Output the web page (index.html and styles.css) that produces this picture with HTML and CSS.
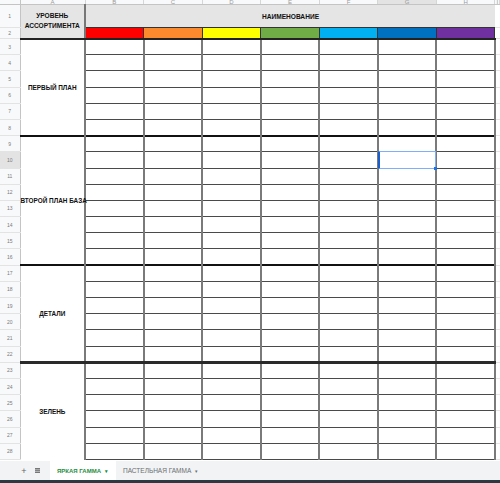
FILE: index.html
```html
<!DOCTYPE html>
<html lang="ru">
<head>
<meta charset="utf-8">
<title>Sheet</title>
<link rel="stylesheet" href="styles.css">
</head>
<body>
<div class="sheet-wrap">
<table class="sheet">
<colgroup><col class="c-rh"><col class="c-a"><col class="c-d" span="7"><col class="c-i"></colgroup>
<tr class="r-colhdr"><th class="corner"></th><th class="ch">A</th><th class="ch">B</th><th class="ch">C</th><th class="ch">D</th><th class="ch">E</th><th class="ch">F</th><th class="ch hl">G</th><th class="ch">H</th><th class="ch">I</th></tr>
<tr class="r1"><th class="rh">1</th><td class="hdr lbl-h" rowspan="2">УРОВЕНЬ<br>АССОРТИМЕНТА</td><td class="hdr title" colspan="7">НАИМЕНОВАНИЕ</td><td class="ext"></td></tr>
<tr class="r2"><th class="rh">2</th><td class="sw red"></td><td class="sw orange"></td><td class="sw yellow"></td><td class="sw green"></td><td class="sw cyan"></td><td class="sw blue"></td><td class="sw purple"></td><td class="ext"></td></tr>

<tr class="rd gtop"><th class="rh">3</th><td class="lbl" rowspan="6">ПЕРВЫЙ ПЛАН</td><td class="d"></td><td class="d"></td><td class="d"></td><td class="d"></td><td class="d"></td><td class="d"></td><td class="d"></td><td class="ext"></td></tr>
<tr class="rd"><th class="rh">4</th><td class="d"></td><td class="d"></td><td class="d"></td><td class="d"></td><td class="d"></td><td class="d"></td><td class="d"></td><td class="ext"></td></tr>
<tr class="rd"><th class="rh">5</th><td class="d"></td><td class="d"></td><td class="d"></td><td class="d"></td><td class="d"></td><td class="d"></td><td class="d"></td><td class="ext"></td></tr>
<tr class="rd"><th class="rh">6</th><td class="d"></td><td class="d"></td><td class="d"></td><td class="d"></td><td class="d"></td><td class="d"></td><td class="d"></td><td class="ext"></td></tr>
<tr class="rd"><th class="rh">7</th><td class="d"></td><td class="d"></td><td class="d"></td><td class="d"></td><td class="d"></td><td class="d"></td><td class="d"></td><td class="ext"></td></tr>
<tr class="rd"><th class="rh">8</th><td class="d"></td><td class="d"></td><td class="d"></td><td class="d"></td><td class="d"></td><td class="d"></td><td class="d"></td><td class="ext"></td></tr>

<tr class="rd gtop"><th class="rh">9</th><td class="lbl" rowspan="8">ВТОРОЙ ПЛАН БАЗА</td><td class="d"></td><td class="d"></td><td class="d"></td><td class="d"></td><td class="d"></td><td class="d"></td><td class="d"></td><td class="ext"></td></tr>
<tr class="rd"><th class="rh hl">10</th><td class="d"></td><td class="d"></td><td class="d"></td><td class="d"></td><td class="d"></td><td class="d sel"></td><td class="d"></td><td class="ext"></td></tr>
<tr class="rd"><th class="rh">11</th><td class="d"></td><td class="d"></td><td class="d"></td><td class="d"></td><td class="d"></td><td class="d"></td><td class="d"></td><td class="ext"></td></tr>
<tr class="rd"><th class="rh">12</th><td class="d"></td><td class="d"></td><td class="d"></td><td class="d"></td><td class="d"></td><td class="d"></td><td class="d"></td><td class="ext"></td></tr>
<tr class="rd"><th class="rh">13</th><td class="d"></td><td class="d"></td><td class="d"></td><td class="d"></td><td class="d"></td><td class="d"></td><td class="d"></td><td class="ext"></td></tr>
<tr class="rd"><th class="rh">14</th><td class="d"></td><td class="d"></td><td class="d"></td><td class="d"></td><td class="d"></td><td class="d"></td><td class="d"></td><td class="ext"></td></tr>
<tr class="rd"><th class="rh">15</th><td class="d"></td><td class="d"></td><td class="d"></td><td class="d"></td><td class="d"></td><td class="d"></td><td class="d"></td><td class="ext"></td></tr>
<tr class="rd"><th class="rh">16</th><td class="d"></td><td class="d"></td><td class="d"></td><td class="d"></td><td class="d"></td><td class="d"></td><td class="d"></td><td class="ext"></td></tr>

<tr class="rd gtop"><th class="rh">17</th><td class="lbl" rowspan="6">ДЕТАЛИ</td><td class="d"></td><td class="d"></td><td class="d"></td><td class="d"></td><td class="d"></td><td class="d"></td><td class="d"></td><td class="ext"></td></tr>
<tr class="rd"><th class="rh">18</th><td class="d"></td><td class="d"></td><td class="d"></td><td class="d"></td><td class="d"></td><td class="d"></td><td class="d"></td><td class="ext"></td></tr>
<tr class="rd"><th class="rh">19</th><td class="d"></td><td class="d"></td><td class="d"></td><td class="d"></td><td class="d"></td><td class="d"></td><td class="d"></td><td class="ext"></td></tr>
<tr class="rd"><th class="rh">20</th><td class="d"></td><td class="d"></td><td class="d"></td><td class="d"></td><td class="d"></td><td class="d"></td><td class="d"></td><td class="ext"></td></tr>
<tr class="rd"><th class="rh">21</th><td class="d"></td><td class="d"></td><td class="d"></td><td class="d"></td><td class="d"></td><td class="d"></td><td class="d"></td><td class="ext"></td></tr>
<tr class="rd"><th class="rh">22</th><td class="d"></td><td class="d"></td><td class="d"></td><td class="d"></td><td class="d"></td><td class="d"></td><td class="d"></td><td class="ext"></td></tr>

<tr class="rd gtop thick"><th class="rh">23</th><td class="lbl" rowspan="6">ЗЕЛЕНЬ</td><td class="d"></td><td class="d"></td><td class="d"></td><td class="d"></td><td class="d"></td><td class="d"></td><td class="d"></td><td class="ext"></td></tr>
<tr class="rd"><th class="rh">24</th><td class="d"></td><td class="d"></td><td class="d"></td><td class="d"></td><td class="d"></td><td class="d"></td><td class="d"></td><td class="ext"></td></tr>
<tr class="rd"><th class="rh">25</th><td class="d"></td><td class="d"></td><td class="d"></td><td class="d"></td><td class="d"></td><td class="d"></td><td class="d"></td><td class="ext"></td></tr>
<tr class="rd"><th class="rh">26</th><td class="d"></td><td class="d"></td><td class="d"></td><td class="d"></td><td class="d"></td><td class="d"></td><td class="d"></td><td class="ext"></td></tr>
<tr class="rd"><th class="rh">27</th><td class="d"></td><td class="d"></td><td class="d"></td><td class="d"></td><td class="d"></td><td class="d"></td><td class="d"></td><td class="ext"></td></tr>
<tr class="rd"><th class="rh">28</th><td class="d"></td><td class="d"></td><td class="d"></td><td class="d"></td><td class="d"></td><td class="d"></td><td class="d"></td><td class="ext"></td></tr>
</table>
</div>
<div class="tabs">
  <span class="tab-add">+</span>
  <span class="tab-list"><svg width="5" height="5" viewBox="0 0 5 5"><rect x="0" y="0" width="5" height="5" fill="#777"/><rect x="0" y="1.6" width="5" height="0.5" fill="#f1f3f4"/><rect x="0" y="3" width="5" height="0.5" fill="#f1f3f4"/></svg></span>
  <span class="tab active">ЯРКАЯ ГАММА <span class="caret">▾</span></span>
  <span class="tab">ПАСТЕЛЬНАЯ ГАММА <span class="caret">▾</span></span>
</div>
<div class="taskline"></div>
</body>
</html>
```
FILE: styles.css
```css
html, body {
  margin: 0;
  padding: 0;
}
body {
  width: 500px;
  height: 483px;
  overflow: hidden;
  background: #fff;
  font-family: "Liberation Sans", Arial, sans-serif;
}
.sheet-wrap {
  height: 461px;
  overflow: hidden;
}
.sheet {
  border-collapse: collapse;
  table-layout: fixed;
  width: 500px;
}
.c-rh { width: 20px; }
.c-a { width: 65px; }
.c-d { width: 58.57px; }
.c-i { width: 5px; }
.sheet th, .sheet td {
  padding: 0;
  overflow: visible;
}
.r-colhdr { height: 4px; }
.corner {
  background: #f8f9fa;
  border-right: 1px solid #c4c4c4;
  border-bottom: 1px solid #c4c4c4;
}
.ch {
  background: #f8f9fa;
  border-right: 1px solid #d6d6d6;
  border-bottom: 1px solid #c4c4c4;
  font-size: 6px;
  line-height: 4px;
  height: 4px;
  color: #9a9a9a;
  font-weight: normal;
  overflow: hidden;
  vertical-align: top;
}
.ch.hl { background: #e3e3e3; }
.r1 { height: 23px; }
.r2 { height: 11px; }
.rd { height: 16.2px; }
.rh {
  background: #f8f9fa;
  border-right: 1px solid #c4c4c4;
  border-bottom: 1px solid #e3e3e3;
  font-size: 5px;
  font-weight: normal;
  color: #7a7a7a;
  text-align: center;
  vertical-align: middle;
}
.rh.hl { background: #e3e3e3; }
.hdr {
  background: #e5e5e5;
  font-weight: bold;
  font-size: 6.6px;
  color: #111;
  text-align: center;
  vertical-align: middle;
}
.lbl-h {
  line-height: 10px;
  border-bottom: 2px solid #222;
  border-right: 2px solid #777;
  padding-top: 1px;
}
.title {
  border-bottom: 1px solid #333;
}
.sw {
  border: 1px solid #333;
  border-bottom: 2px solid #222;
}
.red { background: #ff0000; }
.orange { background: #fb8a2e; }
.yellow { background: #ffff00; }
.green { background: #70ad47; }
.cyan { background: #00b0f0; }
.blue { background: #0070c0; }
.purple { background: #7030a0; }
.ext {
  border-bottom: 1px solid #e3e3e3;
}
.lbl {
  background: #fff;
  font-weight: bold;
  font-size: 6.4px;
  color: #111;
  text-align: center;
  vertical-align: middle;
  white-space: nowrap;
}
.d {
  border-top: 1px solid #4a4a4a;
  border-bottom: 1px solid #4a4a4a;
  border-left: 2px solid #7a7a7a;
  border-right: 2px solid #7a7a7a;
}
.gtop td {
  border-top: 2px solid #111;
}
.thick td {
  border-top: 3px solid #2a2a2a;
}
.gtop td.ext {
  border-top: 1px solid #e3e3e3;
}
.sel {
  position: relative;
}
.sel::after {
  content: "";
  position: absolute;
  left: -1px;
  top: -1px;
  right: -1px;
  bottom: -1px;
  border: 1px solid #7fb0f7;
  border-left: 2px solid #1a5fd0;
  z-index: 1;
}
.sel::before {
  content: "";
  position: absolute;
  right: -2px;
  bottom: -2px;
  width: 3px;
  height: 3px;
  background: #1a73e8;
  z-index: 2;
}
.tabs {
  height: 19px;
  background: #f1f3f4;
  display: flex;
  align-items: stretch;
  font-size: 6.5px;
}
.tab-add {
  width: 8px;
  margin-left: 20px;
  color: #666;
  font-size: 9px;
  display: flex;
  align-items: center;
  justify-content: center;
}
.tab-list {
  width: 8px;
  margin-left: 5px;
  display: flex;
  align-items: center;
  justify-content: center;
}
.tab {
  display: flex;
  align-items: center;
  color: #6b6e72;
  padding: 0 7px 0 7px;
  white-space: nowrap;
}
.tab.active {
  margin-left: 9px;
  background: #fff;
  color: #1e8e3e;
  font-weight: bold;
  padding: 0 8px 0 7px;
  font-size: 6px;
}
.caret {
  font-size: 5px;
  margin-left: 4px;
}
.taskline {
  height: 3px;
  background: #2b3a40;
}
```
